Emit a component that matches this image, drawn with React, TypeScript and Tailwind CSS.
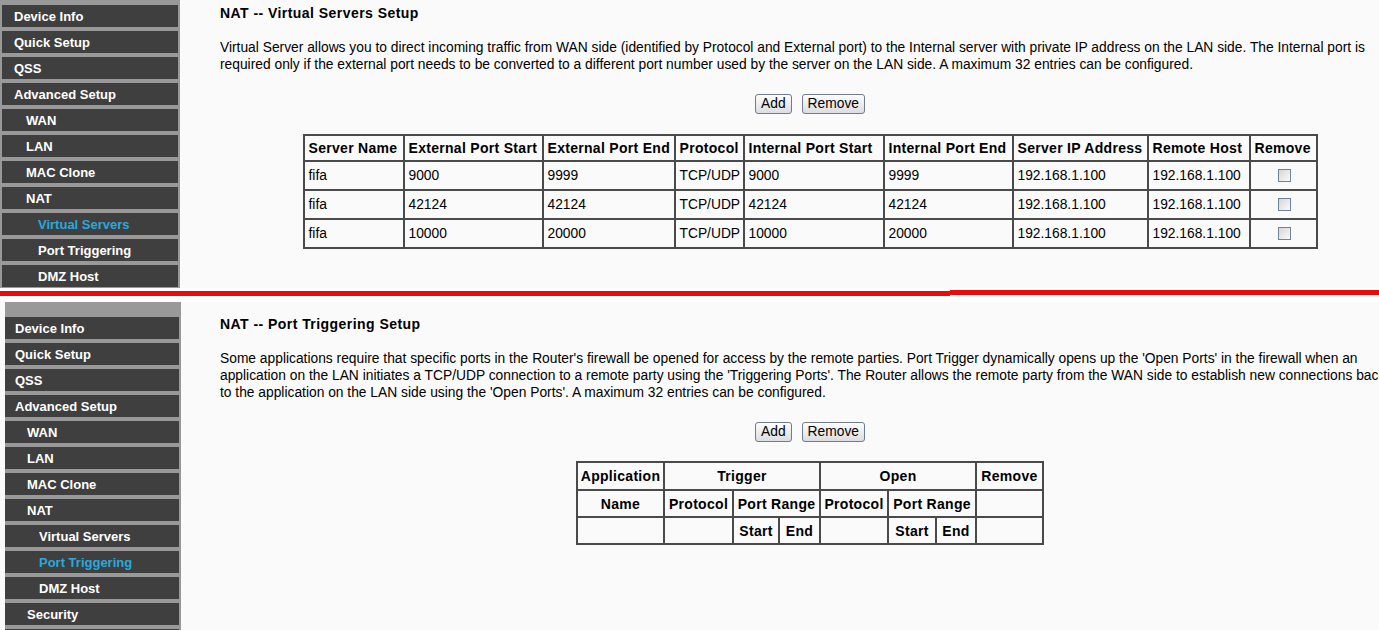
import React from 'react';

type Item = { label: string; level: 1 | 2 | 3; active?: boolean };

const topMenu: Item[] = [
  { label: 'Device Info', level: 1 },
  { label: 'Quick Setup', level: 1 },
  { label: 'QSS', level: 1 },
  { label: 'Advanced Setup', level: 1 },
  { label: 'WAN', level: 2 },
  { label: 'LAN', level: 2 },
  { label: 'MAC Clone', level: 2 },
  { label: 'NAT', level: 2 },
  { label: 'Virtual Servers', level: 3, active: true },
  { label: 'Port Triggering', level: 3 },
  { label: 'DMZ Host', level: 3 },
];

const bottomMenu: Item[] = [
  { label: 'Device Info', level: 1 },
  { label: 'Quick Setup', level: 1 },
  { label: 'QSS', level: 1 },
  { label: 'Advanced Setup', level: 1 },
  { label: 'WAN', level: 2 },
  { label: 'LAN', level: 2 },
  { label: 'MAC Clone', level: 2 },
  { label: 'NAT', level: 2 },
  { label: 'Virtual Servers', level: 3 },
  { label: 'Port Triggering', level: 3, active: true },
  { label: 'DMZ Host', level: 3 },
  { label: 'Security', level: 2 },
];

const indent = { 1: 'pl-[12px]', 2: 'pl-[24px]', 3: 'pl-[36px]' };
const indentB = { 1: 'pl-[10px]', 2: 'pl-[22px]', 3: 'pl-[34px]' };

const servers = [
  ['fifa', '9000', '9999', 'TCP/UDP', '9000', '9999', '192.168.1.100', '192.168.1.100'],
  ['fifa', '42124', '42124', 'TCP/UDP', '42124', '42124', '192.168.1.100', '192.168.1.100'],
  ['fifa', '10000', '20000', 'TCP/UDP', '10000', '20000', '192.168.1.100', '192.168.1.100'],
];

const serverCols = [
  ['Server Name', 'w-[100px]'],
  ['External Port Start', 'w-[139px]'],
  ['External Port End', 'w-[132px]'],
  ['Protocol', 'w-[69px]'],
  ['Internal Port Start', 'w-[140px]'],
  ['Internal Port End', 'w-[129px]'],
  ['Server IP Address', 'w-[135px]'],
  ['Remote Host', 'w-[102px]'],
  ['Remove', 'w-[67px]'],
];

function Sidebar({ items, first }: { items: Item[]; first: boolean }) {
  return (
    <div
      className={
        first
          ? 'w-[180px] shrink-0 bg-[#999999] px-[2px] pt-[5px] h-[288px] flex flex-col gap-[4px]'
          : 'ml-[5px] w-[176px] shrink-0 bg-[#999999] pr-[2px] pt-[15px] h-[328px] flex flex-col gap-[4px] overflow-hidden'
      }
    >
      {items.map((it) => (
        <div
          key={it.label}
          className={`h-[22px] shrink-0 bg-[#3f3f3f] flex items-center font-bold text-[13px] leading-none ${
            first ? indent[it.level] : indentB[it.level]
          } ${it.active ? 'text-[#2aa8dd]' : 'text-white'}`}
        >
          {it.label}
        </div>
      ))}
      {!first && <div className="h-[22px] shrink-0 bg-[#3f3f3f]" />}
    </div>
  );
}

function Buttons() {
  return (
    <div className="flex justify-center gap-[10px]">
      <button className="h-[20px] px-[5px] rounded-[3px] border border-[#707c8c] bg-gradient-to-b from-[#fdfdfd] to-[#dcdde3] text-[13.8px] leading-none text-black">
        Add
      </button>
      <button className="h-[20px] px-[5px] rounded-[3px] border border-[#707c8c] bg-gradient-to-b from-[#fdfdfd] to-[#dcdde3] text-[13.8px] leading-none text-black">
        Remove
      </button>
    </div>
  );
}

function CheckBox() {
  return (
    <span className="inline-block w-[13px] h-[13px] border border-[#6f8297] bg-gradient-to-br from-[#d6d6d6] to-[#fbfbfb] align-middle" />
  );
}

const th = 'border-2 border-[#4a4a4a] font-bold text-[14px] tracking-[0.3px] leading-none';
const td = 'border-2 border-[#4a4a4a] text-[13.8px] leading-none pl-[4px] pr-[2px]';

function ServersTable() {
  return (
    <table className="mx-auto border-collapse border-2 border-[#4a4a4a] table-fixed w-[1013px]">
      <thead>
        <tr className="h-[26px]">
          {serverCols.map(([c, w]) => (
            <th key={c} className={`${th} ${w} pl-[4px] pr-[1px] text-left whitespace-nowrap`}>
              {c}
            </th>
          ))}
        </tr>
      </thead>
      <tbody>
        {servers.map((row, i) => (
          <tr key={i} className="h-[29px]">
            {row.map((v, j) => (
              <td key={j} className={`${td} whitespace-nowrap`}>
                {v}
              </td>
            ))}
            <td className={`${td} text-center`}>
              <CheckBox />
            </td>
          </tr>
        ))}
      </tbody>
    </table>
  );
}

function TriggerTable() {
  const c = `${th} text-center whitespace-nowrap px-[2px]`;
  return (
    <table className="mx-auto border-collapse border-2 border-[#4a4a4a] table-fixed w-[466px]">
      <colgroup>
        <col className="w-[87px]" />
        <col className="w-[69px]" />
        <col className="w-[46px]" />
        <col className="w-[41px]" />
        <col className="w-[68px]" />
        <col className="w-[48px]" />
        <col className="w-[40px]" />
        <col className="w-[67px]" />
      </colgroup>
      <tbody>
        <tr className="h-[28px]">
          <td className={c}>Application</td>
          <td className={c} colSpan={3}>Trigger</td>
          <td className={c} colSpan={3}>Open</td>
          <td className={c}>Remove</td>
        </tr>
        <tr className="h-[27px]">
          <td className={c}>Name</td>
          <td className={c}>Protocol</td>
          <td className={c} colSpan={2}>Port Range</td>
          <td className={c}>Protocol</td>
          <td className={c} colSpan={2}>Port Range</td>
          <td className={c}></td>
        </tr>
        <tr className="h-[27px]">
          <td className={c}></td>
          <td className={c}></td>
          <td className={c}>Start</td>
          <td className={c}>End</td>
          <td className={c}></td>
          <td className={c}>Start</td>
          <td className={c}>End</td>
          <td className={c}></td>
        </tr>
      </tbody>
    </table>
  );
}

export default function App() {
  return (
    <div
      className="w-[1379px] h-[630px] overflow-hidden bg-[#fafafa] text-black"
      style={{ fontFamily: '"Liberation Sans", Arial, sans-serif' }}
    >
      {/* top capture: Virtual Servers */}
      <div className="flex h-[288px]">
        <Sidebar items={topMenu} first />
        <div className="pl-[40px] pt-[5px] w-[1220px] shrink-0">
          <h1 className="font-bold text-[14px] tracking-[0.45px] leading-[16px]">NAT -- Virtual Servers Setup</h1>
          <p className="mt-[18px] text-[13.8px] leading-[17px] whitespace-nowrap">
            Virtual Server allows you to direct incoming traffic from WAN side (identified by Protocol and External port) to the Internal server with private IP address on the LAN side. The Internal port is
            <br />
            required only if the external port needs to be converted to a different port number used by the server on the LAN side. A maximum 32 entries can be configured.
          </p>
          <div className="mt-[21px] w-[1180px]">
            <Buttons />
          </div>
          <div className="mt-[20px] w-[1180px]">
            <ServersTable />
          </div>
        </div>
      </div>

      {/* separator */}
      <div className="h-[14px] bg-white flex items-start">
        <div className="mt-[3px] h-[5px] w-[950px] bg-[#ee0a0a]" />
        <div className="mt-[2px] h-[5px] flex-1 bg-[#ee0a0a]" />
      </div>

      {/* bottom capture: Port Triggering */}
      <div className="flex h-[328px]">
        <Sidebar items={bottomMenu} first={false} />
        <div className="pl-[39px] pt-[14px] w-[1220px] shrink-0">
          <h1 className="font-bold text-[14px] tracking-[0.45px] leading-[16px]">NAT -- Port Triggering Setup</h1>
          <p className="mt-[18px] text-[13.8px] leading-[17px] whitespace-nowrap">
            Some applications require that specific ports in the Router's firewall be opened for access by the remote parties. Port Trigger dynamically opens up the 'Open Ports' in the firewall when an
            <br />
            application on the LAN initiates a TCP/UDP connection to a remote party using the 'Triggering Ports'. The Router allows the remote party from the WAN side to establish new connections back
            <br />
            to the application on the LAN side using the 'Open Ports'. A maximum 32 entries can be configured.
          </p>
          <div className="mt-[21px] w-[1180px]">
            <Buttons />
          </div>
          <div className="mt-[19px] w-[1180px]">
            <TriggerTable />
          </div>
        </div>
      </div>
    </div>
  );
}
